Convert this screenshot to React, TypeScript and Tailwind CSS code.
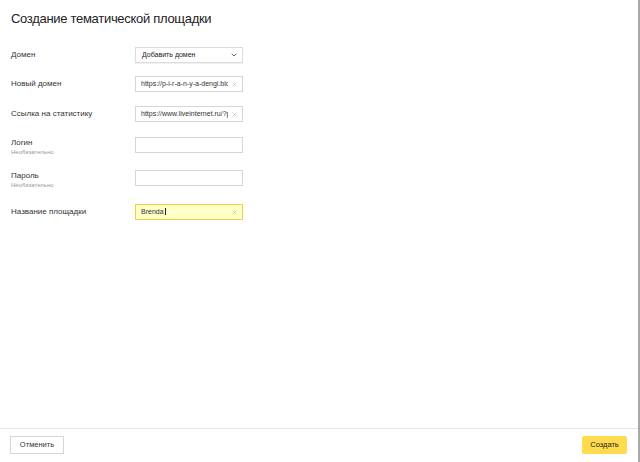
import { ChevronDown, X } from 'lucide-react';

type Row = {
  label: string;
  hint?: string;
  kind: 'select' | 'input';
  value?: string;
  active?: boolean;
  clear?: boolean;
  top: string;
};

const rows: Row[] = [
  { label: 'Домен', kind: 'select', value: 'Добавить домен', top: 'mt-[19px]' },
  { label: 'Новый домен', kind: 'input', value: 'https://p-i-r-a-n-y-a-dengi.blogspot.com', clear: true, top: 'mt-[13px]' },
  { label: 'Ссылка на статистику', kind: 'input', value: 'https://www.liveinternet.ru/?p-i-r-a-n-y-a-dengi', clear: true, top: 'mt-[14px]' },
  { label: 'Логин', hint: 'Необязательно', kind: 'input', top: 'mt-[15px]' },
  { label: 'Пароль', hint: 'Необязательно', kind: 'input', top: 'mt-[14px]' },
  { label: 'Название площадки', kind: 'input', value: 'Brenda', active: true, clear: true, top: 'mt-[15px]' },
];

function Field({ row }: { row: Row }) {
  if (row.kind === 'select') {
    return (
      <div className="flex h-[16px] w-[108px] items-center justify-between border border-[#dcdcdc] bg-white pl-[6px] pr-[4px] text-[7px] text-[#222] shadow-[0_1px_1px_rgba(0,0,0,0.06)]">
        <span>{row.value}</span>
        <ChevronDown className="h-[8px] w-[8px] text-[#444]" strokeWidth={2.5} />
      </div>
    );
  }
  return (
    <div
      className={
        'flex h-[16px] w-[108px] items-center border pl-[5px] pr-[4px] text-[7px] text-[#333] ' +
        (row.active ? 'border-[#f2d13c] bg-[#ffffc8]' : 'border-[#d6d6d6] bg-white')
      }
    >
      <span className="min-w-0 flex-1 overflow-hidden whitespace-nowrap">
        {row.value}
        {row.active && <span className="ml-[1px] inline-block h-[7px] w-px translate-y-[1px] bg-[#222]" />}
      </span>
      {row.clear && <X className="ml-[3px] h-[7px] w-[7px] shrink-0 text-[#b5b5b5]" strokeWidth={2} />}
    </div>
  );
}

export default function App() {
  return (
    <div className="flex h-[462px] w-[640px] bg-white font-['Liberation_Sans',Arial,sans-serif]">
      <div className="flex flex-1 flex-col">
        {/* Form */}
        <div className="flex-1 px-[11px] pt-[10px]">
          <h1 className="text-[13px] leading-[18px] tracking-[-0.3px] text-[#222]">Создание тематической площадки</h1>
          {rows.map((row) => (
            <div key={row.label} className={'flex items-start ' + row.top}>
              <div className={'w-[124px] ' + (row.hint ? 'pt-[1px]' : 'pt-[3px]')}>
                <div className="text-[8px] leading-[10px] text-[#333]">{row.label}</div>
                {row.hint && <div className="text-[6px] leading-[8px] text-[#999]">{row.hint}</div>}
              </div>
              <Field row={row} />
            </div>
          ))}
        </div>

        {/* Footer */}
        <div className="flex h-[34px] items-start justify-between border-t border-[#e6e6e6] px-[10px] pt-[7px]">
          <button className="h-[18px] w-[54px] border border-[#d6d6d6] bg-white text-[7.5px] text-[#333]">
            Отменить
          </button>
          <button className="mr-[1px] h-[18px] w-[45px] rounded-[2px] bg-[#ffdb4d] text-[7.5px] text-[#222]">
            Создать
          </button>
        </div>
      </div>
      <div className="w-[2px] bg-[#a8a8a8]" />
    </div>
  );
}
